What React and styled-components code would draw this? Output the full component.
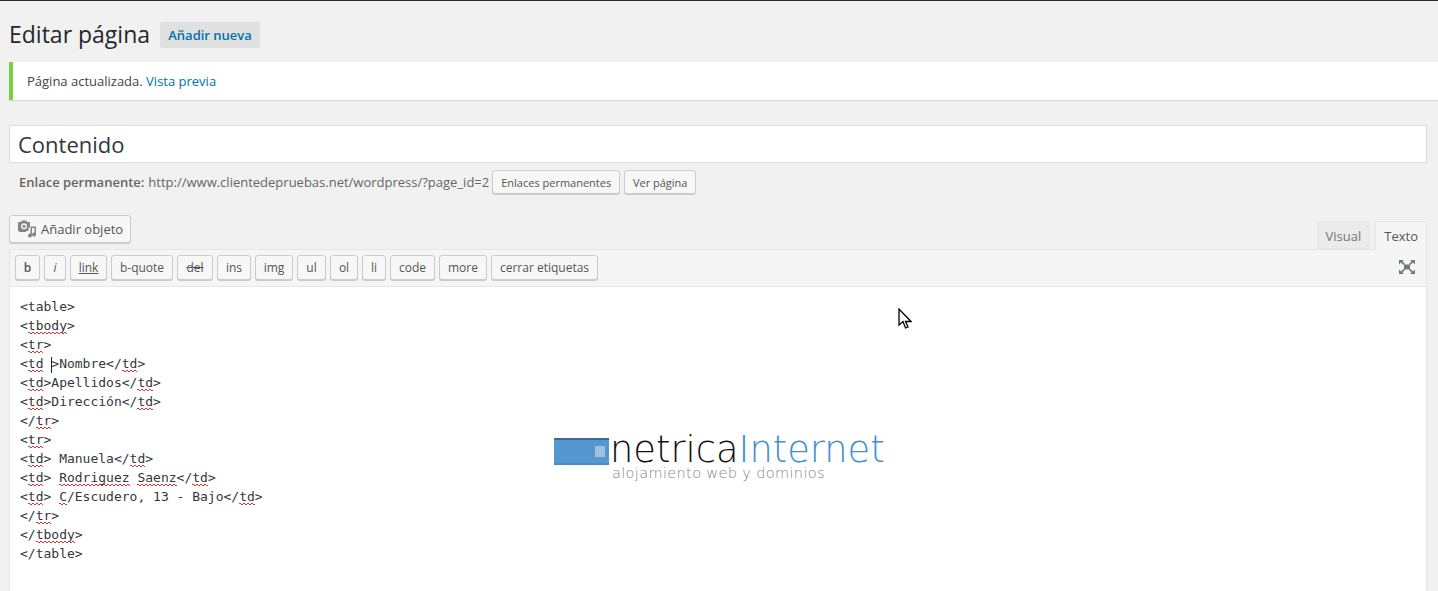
import React from "react";
import styled, { createGlobalStyle } from "styled-components";

const GlobalStyle = createGlobalStyle`
    html, body {
        margin: 0;
        height: 591px;
        overflow: hidden;
        background: #f1f1f1;
    }
    body {
        font-family: "Open Sans", sans-serif;
        font-size: 13px;
        color: #444;
    }
`
const Page = styled.div`
    position: relative;
    height: 591px;
    overflow: hidden;
    border-top: 1px solid #23282d;
    box-sizing: border-box;
    padding-left: 9px;
`
const Heading = styled.div`
    display: flex;
    align-items: center;
    height: 26px;
    margin-top: 21px;
`
const Title = styled.h1`
    margin: 0 0 2px;
    font-size: 23px;
    font-weight: 400;
    line-height: 26px;
    color: #23282d;
`
const AddNew = styled.a`
    margin-left: 10px;
    width: 100px;
    height: 26px;
    line-height: 26px;
    text-align: center;
    background: #e0e0e0;
    border-radius: 2px;
    font-size: 13px;
    font-weight: 600;
    color: #0073aa;
`
const Notice = styled.div`
    margin-top: 14px;
    height: 38px;
    line-height: 38px;
    box-sizing: border-box;
    padding-left: 14px;
    background: #fff;
    border-left: 4px solid #7ad03a;
    box-shadow: 0 1px 1px rgba(0, 0, 0, 0.1);
    font-size: 13px;
    color: #444;
`
const TextLink = styled.a`
    color: #0073aa;
`
const TitleInput = styled.div`
    margin-top: 25px;
    width: 1418px;
    height: 38px;
    box-sizing: border-box;
    padding-left: 8px;
    background: #fff;
    border: 1px solid #ddd;
    font-size: 22px;
    line-height: 36px;
    color: #32373c;
`
const Permalink = styled.div`
    display: flex;
    align-items: center;
    margin-top: 7px;
    height: 24px;
    padding-left: 10px;
    font-size: 13px;
    color: #666;
`
const PermalinkLabel = styled.strong`
    font-weight: 600;
    margin-right: 4px;
`
const SmallButton = styled.button`
    height: 24px;
    margin-left: ${(props) => props.$gap || 4}px;
    padding: 0;
    width: ${(props) => props.$width}px;
    font-family: inherit;
    font-size: 11px;
    color: #555;
    background: #f7f7f7;
    border: 1px solid #ccc;
    border-radius: 3px;
    box-shadow: 0 1px 0 #ccc;
`
const EditorHead = styled.div`
    display: flex;
    justify-content: space-between;
    align-items: flex-end;
    margin-top: 21px;
    width: 1418px;
    height: 34px;
`
const MediaButton = styled.button`
    display: flex;
    align-items: center;
    align-self: flex-start;
    width: 122px;
    height: 28px;
    padding: 0 0 0 8px;
    box-sizing: border-box;
    font-family: inherit;
    font-size: 13px;
    color: #555;
    background: #f7f7f7;
    border: 1px solid #ccc;
    border-radius: 3px;
    box-shadow: 0 1px 0 #ccc;
    svg {
        margin-right: 5px;
    }
`
const Tabs = styled.div`
    display: flex;
    gap: 5px;
`
const Tab = styled.div`
    height: ${(props) => (props.$active ? 29 : 28)}px;
    line-height: 28px;
    box-sizing: border-box;
    padding: 0 8px;
    font-size: 13px;
    color: ${(props) => (props.$active ? "#555" : "#777")};
    background: ${(props) => (props.$active ? "#f5f5f5" : "#ebebeb")};
    border: 1px solid ${(props) => (props.$active ? "#e5e5e5" : "#e8e8e8")};
    border-bottom: ${(props) => (props.$active ? "none" : "1px solid #e5e5e5")};
    margin-bottom: ${(props) => (props.$active ? -1 : 0)}px;
    position: relative;
`
const Editor = styled.div`
    width: 1418px;
    height: 400px;
    box-sizing: border-box;
    background: #fff;
    border: 1px solid #e5e5e5;
`
const Toolbar = styled.div`
    display: flex;
    align-items: center;
    justify-content: space-between;
    height: 37px;
    box-sizing: border-box;
    padding: 0 10px 2px 5px;
    background: #f5f5f5;
    border-bottom: 1px solid #e5e5e5;
`
const QuickTags = styled.div`
    display: flex;
    gap: 4px;
`
const Tag = styled.button`
    height: 25px;
    width: ${(props) => props.$width}px;
    padding: 0;
    font-family: inherit;
    font-size: 12px;
    font-weight: ${(props) => (props.$bold ? 600 : 400)};
    font-style: ${(props) => (props.$italic ? "italic" : "normal")};
    text-decoration: ${(props) => props.$line || "none"};
    color: #555;
    background: #f7f7f7;
    border: 1px solid #ccc;
    border-radius: 3px;
    box-shadow: 0 1px 0 #ccc;
`
const Code = styled.pre`
    margin: 0;
    padding: 10px 10px 0;
    font-family: "DejaVu Sans Mono", monospace;
    font-size: 13px;
    line-height: 19px;
    color: #32373c;
`
const Miss = styled.span`
    position: relative;
    &::after {
        content: "";
        position: absolute;
        left: 0;
        right: 0;
        top: 14px;
        height: 2px;
        background-image: linear-gradient(90deg, #e03030 50%, transparent 50%), linear-gradient(90deg, #e03030 50%, transparent 50%);
        background-size: 4px 1px;
        background-position: 0 0, 2px 1px;
        background-repeat: repeat-x;
    }
`
const Caret = styled.span`
    position: absolute;
    left: 51px;
    top: 356px;
    width: 1px;
    height: 16px;
    background: #222;
`
const Logo = styled.div`
    position: absolute;
    left: 554px;
    top: 429px;
    display: flex;
    align-items: flex-start;
`
const LogoMark = styled.div`
    position: relative;
    width: 55px;
    height: 27px;
    margin-top: 8px;
    box-sizing: border-box;
    background: #5598d0;
    border-top: 2px solid #3c6a94;
    border-bottom: 2px solid #4a8ac4;
`
const LogoDot = styled.span`
    position: absolute;
    right: 4px;
    top: 6px;
    width: 10px;
    height: 11px;
    background: #a0c2e0;
`
const LogoText = styled.div`
    margin-left: 1px;
    font-family: "DejaVu Sans", sans-serif;
    font-weight: 200;
`
const LogoName = styled.div`
    font-size: 36.8px;
    line-height: 40px;
    white-space: nowrap;
    color: #111;
    span {
        color: #4090d4;
    }
`
const LogoSlogan = styled.div`
    margin-top: -5px;
    margin-left: 2px;
    font-size: 14.5px;
    line-height: 16px;
    letter-spacing: 0.35px;
    white-space: nowrap;
    color: #858585;
`
const Pointer = styled.svg`
    position: absolute;
    left: 898px;
    top: 307px;
`

const tags = [
    { label: "b", width: 25, bold: true },
    { label: "i", width: 22, italic: true },
    { label: "link", width: 37, line: "underline" },
    { label: "b-quote", width: 62 },
    { label: "del", width: 36, line: "line-through" },
    { label: "ins", width: 34 },
    { label: "img", width: 38 },
    { label: "ul", width: 29 },
    { label: "ol", width: 28 },
    { label: "li", width: 24 },
    { label: "code", width: 45 },
    { label: "more", width: 48 },
    { label: "cerrar etiquetas", width: 107 },
];

const App = () => {
    return (
        <>
            <GlobalStyle />
            <Page>
                <Heading>
                    <Title>Editar página</Title>
                    <AddNew>Añadir nueva</AddNew>
                </Heading>
                <Notice>
                    Página actualizada. <TextLink>Vista previa</TextLink>
                </Notice>
                <TitleInput>Contenido</TitleInput>
                <Permalink>
                    <PermalinkLabel>Enlace permanente:</PermalinkLabel>
                    http://www.clientedepruebas.net/wordpress/?page_id=2
                    <SmallButton $gap={3} $width={128}>Enlaces permanentes</SmallButton>
                    <SmallButton $width={72}>Ver página</SmallButton>
                </Permalink>
                <EditorHead>
                    <MediaButton>
                        <svg width="18" height="18" viewBox="0 0 18 18" fill="#82878c">
                            <path fillRule="evenodd" d="M0 2h2.500L4 .5h4L9.500 2H12v5.500h-1.500V11H8v1H1.500L0 10.500zM6 3.200a3 3 0 1 0 0 6 3 3 0 0 0 0-6z" />
                            <circle cx="6" cy="6.200" r="1.500" />
                            <path d="M12.500 6.500H18V14.500a2 2 0 1 1-1.500-1.900V8h-2.500v7.500a2 2 0 1 1-1.500-1.900z" />
                        </svg>
                        Añadir objeto
                    </MediaButton>
                    <Tabs>
                        <Tab>Visual</Tab>
                        <Tab $active>Texto</Tab>
                    </Tabs>
                </EditorHead>
                <Editor>
                    <Toolbar>
                        <QuickTags>
                            {tags.map((tag) => (
                                <Tag
                                    key={tag.label}
                                    $width={tag.width}
                                    $bold={tag.bold}
                                    $italic={tag.italic}
                                    $line={tag.line}
                                >
                                    {tag.label}
                                </Tag>
                            ))}
                        </QuickTags>
                        <svg width="18" height="16" viewBox="0 0 18 16" fill="#72777c">
                            <rect x="6" y="5.500" width="6" height="5" />
                            <path d="M1 1h5L4.400 2.600 7 5 5.600 6 3 3.600 1 5.500zM17 1h-5l1.600 1.600L11 5l1.400 1L15 3.600l2 1.900zM1 15h5l-1.600-1.600L7 11l-1.400-1L3 12.400l-2-1.900zM17 15h-5l1.600-1.600L11 11l1.400-1 2.600 2.400 2-1.900z" />
                        </svg>
                    </Toolbar>
                    <Code>
                        {"<table>\n<"}<Miss>tbody</Miss>{">\n<"}<Miss>tr</Miss>{">\n<"}<Miss>td</Miss>{" >Nombre</"}<Miss>td</Miss>{">\n<"}
                        <Miss>td</Miss>{">Apellidos</"}<Miss>td</Miss>{">\n<"}
                        <Miss>td</Miss>{">Dirección</"}<Miss>td</Miss>{">\n</"}
                        <Miss>tr</Miss>{">\n<"}<Miss>tr</Miss>{">\n<"}
                        <Miss>td</Miss>{"> Manuela</"}<Miss>td</Miss>{">\n<"}
                        <Miss>td</Miss>{"> "}<Miss>Rodriguez</Miss>{" "}<Miss>Saenz</Miss>{"</"}<Miss>td</Miss>{">\n<"}
                        <Miss>td</Miss>{"> "}<Miss>C</Miss>{"/Escudero, 13 - Bajo</"}<Miss>td</Miss>{">\n</"}
                        <Miss>tr</Miss>{">\n</"}<Miss>tbody</Miss>{">\n</table>"}
                    </Code>
                </Editor>
                <Caret />
                <Logo>
                    <LogoMark><LogoDot /></LogoMark>
                    <LogoText>
                        <LogoName>netrica<span>Internet</span></LogoName>
                        <LogoSlogan>alojamiento web y dominios</LogoSlogan>
                    </LogoText>
                </Logo>
                <Pointer width="14" height="22" viewBox="0 0 14 22">
                    <path d="M1 1v16l4-3.500L7.500 20l2.500-1-2.500-5.500H13z" fill="#fff" stroke="#000" strokeWidth="1.300" />
                </Pointer>
            </Page>
        </>
    )
}

export default App;
